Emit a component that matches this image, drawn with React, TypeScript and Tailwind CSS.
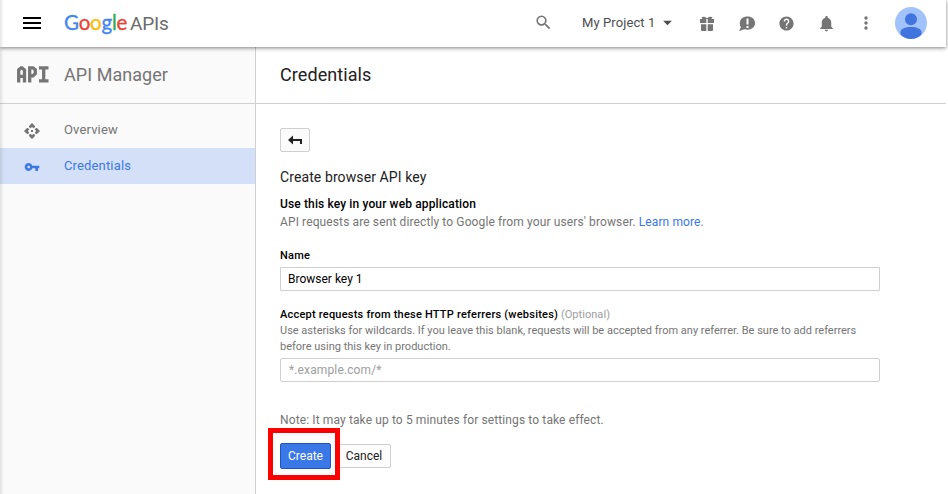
import { MdArrowDropDown, MdHelp, MdMoreVert, MdNotifications, MdSearch, MdVpnKey } from "react-icons/md";

function GoogleLogo() {
  return (
    <div className="flex items-baseline whitespace-nowrap">
      <span className="w-[66px] font-[Lato,sans-serif] text-[20.5px] leading-[28px] tracking-[-0.2px] [-webkit-text-stroke:0.35px_currentColor]">
        <span className="text-[#4285f4]">G</span>
        <span className="text-[#ea4335]">o</span>
        <span className="text-[#fbbc05]">o</span>
        <span className="text-[#4285f4]">g</span>
        <span className="text-[#34a853]">l</span>
        <span className="text-[#ea4335]">e</span>
      </span>
      <span className="w-[40px] text-[19px] leading-[28px] tracking-[-0.2px] text-[#6b6b6b]">APIs</span>
    </div>
  );
}

function GiftIcon() {
  return (
    <svg width="14" height="15" viewBox="0 0 14 15" fill="#757575">
      <path d="M0 3h6.300v4H0zM7.700 3H14v4H7.700zM1 8.300h5.300V15H2a1 1 0 0 1-1-1zM7.700 8.300H13V14a1 1 0 0 1-1 1H7.700z" />
      <path d="M1.500 1.200C3 .2 5.500.5 7 2.200C8.500.5 11 .2 12.500 1.200L11.500 3h-9z" />
    </svg>
  );
}

function FeedbackIcon() {
  return (
    <svg width="17" height="16" viewBox="0 0 17 16">
      <path d="M8.500 0.500C13 .5 16 3.200 16 7.100S13 13.800 8.500 13.800c-1 0-2-.2-3-.5L0 15l1.900-3.800C1 10 .8 8.600.8 7.100.8 3.200 4 .5 8.500.5z" fill="#757575" />
      <path d="M7.500 2.500h2v6h-2zM7.500 10h2v2h-2z" fill="#fff" />
    </svg>
  );
}

function Avatar() {
  return (
    <svg width="32" height="32" viewBox="0 0 32 32">
      <circle cx="16" cy="16" r="16" fill="#a1c2fa" />
      <circle cx="16" cy="12.200" r="6" fill="#4274e0" />
      <path d="M5.500 27.500V25c0-3 4.500-5 10.500-5s10.500 2 10.500 5v2.500C24 30.300 20 32 16 32s-8-1.700-10.500-4.500z" fill="#4274e0" />
    </svg>
  );
}

function ApiGlyph() {
  return (
    <svg width="32" height="17" viewBox="0 0 32 17" fill="none" stroke="#757575" strokeWidth="3.300">
      <path d="M1.700 16.500V4L4 1.800h1L7.500 4v12.500M1.700 10.300h6" />
      <path d="M12.700 16.500V1.800H16L18.300 3.800V7.500l-2.300 2.300h-3.300" />
      <path d="M22 1.800h9.500M26.700 1.800v13M22 14.800h9.500" />
    </svg>
  );
}

function OverviewIcon() {
  return (
    <svg width="16" height="16" viewBox="0 0 16 16" fill="#757575">
      <path d="M8 0l3 3v1L9.700 5.300 8 3.900 6.300 5.300 5 4V3zM8 16l3-3v-1l-1.300-1.300L8 12.100l-1.700-1.400L5 12v1zM0 8l3-3h1l1.300 1.300L3.900 8l1.400 1.700L4 11H3zM16 8l-3-3h-1l-1.300 1.300L12.100 8l-1.400 1.700L12 11h1z" />
      <rect x="7" y="7" width="2" height="2" />
    </svg>
  );
}

function Header() {
  return (
    <header className="relative z-10 flex h-[47px] w-[946px] items-center bg-white pb-px shadow-[0_1px_4px_rgba(0,0,0,0.5)]">
      <button className="ml-[23px] flex h-3 w-[18px] flex-col justify-between" aria-label="Menu">
        <span className="h-0.5 w-full bg-black" />
        <span className="h-0.5 w-full bg-black" />
        <span className="h-0.5 w-full bg-black" />
      </button>
      <div className="ml-[23px] w-[107px]"><GoogleLogo /></div>
      <MdSearch className="-mt-px ml-[363px] size-[19px] text-[#757575]" />
      <span className="-mt-px ml-[29px] w-[74px] text-[13px] whitespace-nowrap tracking-[0.1px] text-[#4d4d4d]">My Project 1</span>
      <MdArrowDropDown className="-mt-px ml-px size-[21px] text-[#4d4d4d]" />
      <div className="ml-[22px]"><GiftIcon /></div>
      <div className="ml-[25px] pt-0.5"><FeedbackIcon /></div>
      <MdHelp className="ml-[22px] size-[17px] text-[#757575]" />
      <MdNotifications className="ml-[22px] size-[19px] text-[#757575]" />
      <MdMoreVert className="-mt-px ml-5 size-5 text-[#757575]" />
      <div className="ml-[19px]"><Avatar /></div>
    </header>
  );
}

function Sidebar() {
  return (
    <aside className="w-64 shrink-0 border-r border-[#d0d0d0] bg-[#fafafa]">
      <div className="flex h-[57px] items-center border-b border-[#d0d0d0] pb-0.5 pl-[17px]">
        <div className="pt-px"><ApiGlyph /></div>
        <span className="ml-[15px] text-[18px] tracking-[0.05px] text-[#757575]">API Manager</span>
      </div>
      <nav className="pt-2 text-[13px] tracking-[0.15px]">
        <div className="flex h-9 items-center pl-6 text-[#757575]">
          <div className="pt-0.5"><OverviewIcon /></div>
          <span className="ml-6">Overview</span>
        </div>
        <div className="flex h-9 items-center bg-[#d4e0f7] pl-6 text-[#3b78e7]">
          <MdVpnKey className="mt-0.5 size-4" />
          <span className="ml-6">Credentials</span>
        </div>
      </nav>
    </aside>
  );
}

function BackArrow() {
  return (
    <svg width="14" height="10" viewBox="0 0 14 10" fill="#212121">
      <path d="M0 5l5-4.500V4h9v5h-2V6H5v3.500z" />
    </svg>
  );
}

function CredentialsForm() {
  return (
    <form className="flex flex-col items-start pt-6 pl-6 text-[12px]">
      <button type="button" aria-label="Back" className="flex h-6 w-[30px] items-center justify-center rounded-[2px] border border-[#cfcfcf] bg-[#fbfbfb]">
        <BackArrow />
      </button>
      <h2 className="mt-4 h-[18px] text-[14px] leading-[18px] tracking-[0.1px] text-[#212121]">Create browser API key</h2>
      <p className="mt-[9px] h-[18px] leading-[18px] font-medium tracking-[0.13px] text-black">Use this key in your web application</p>
      <p className="h-[18px] leading-[18px] tracking-[0.117px] text-[#757575]">
        API requests are sent directly to Google from your users' browser. <a className="text-[#3b78e7]">Learn more</a>.
      </p>
      <label className="mt-[17px] h-4 text-[11px] leading-4 font-medium tracking-[0.2px] text-black">Name</label>
      <input defaultValue="Browser key 1" className="mt-[3px] h-6 w-[600px] rounded-[1px] border border-[#cfcfcf] px-[7px] text-[12px] text-black outline-none" />
      <label className="mt-4 h-4 text-[11px] leading-4 tracking-[0.05px] text-[#9e9e9e]">
        <span className="font-medium tracking-[0.22px] text-black">Accept requests from these HTTP referrers (websites)</span> (Optional)
      </label>
      <p className="h-8 w-[600px] text-[11px] leading-4 text-[#757575]">
        Use asterisks for wildcards. If you leave this blank, requests will be accepted from any referrer. Be sure to add referrers
        <br />
        before using this key in production.
      </p>
      <input placeholder="*.example.com/*" className="mt-[3px] h-6 w-[600px] rounded-[2px] border border-[#cfcfcf] px-2 text-[12px] tracking-[0.13px] outline-none placeholder:text-[#9e9e9e]" />
      <p className="mt-[29px] h-[18px] leading-[18px] tracking-[0.117px] text-[#757575]">Note: It may take up to 5 minutes for settings to take effect.</p>
      <div className="mt-3.5 flex items-center">
        <div className="relative z-10">
          <button type="button" className="block h-[26px] w-[51px] rounded-[2px] border border-[#1a56c8] bg-[#3b78e7] text-white">Create</button>
          <span className="pointer-events-none absolute top-[-15px] left-[-12px] h-[52px] w-[72px] border-5 border-[#fe0000]" />
        </div>
        <button type="button" className="ml-1.5 h-6 w-[54px] rounded-[2px] border border-[#cfcfcf] bg-[#fcfcfc] text-[#212121]">Cancel</button>
      </div>
    </form>
  );
}

export default function App() {
  return (
    <div className="relative flex h-[494px] w-[948px] flex-col overflow-hidden bg-white font-[Roboto,sans-serif]">
      <Header />
      <div className="flex min-h-0 w-[946px] flex-1">
        <Sidebar />
        <main className="min-w-0 flex-1 bg-white">
          <h1 className="flex h-[57px] items-center border-b border-[#d0d0d0] pb-0.5 pl-6 text-[18px] tracking-[0.08px] text-[#212121]">Credentials</h1>
          <CredentialsForm />
        </main>
      </div>
      <div className="pointer-events-none absolute inset-y-0 left-0 z-20 w-1 bg-linear-to-r from-black/10 to-transparent" />
    </div>
  );
}
